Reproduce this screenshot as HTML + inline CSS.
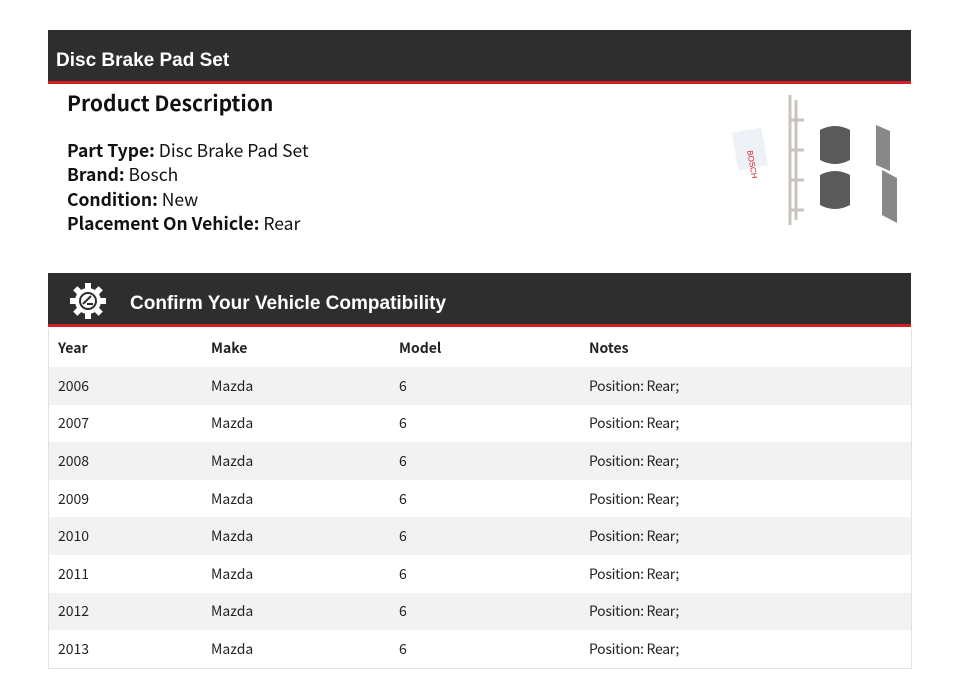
<!DOCTYPE html>
<html><head><meta charset="utf-8"><style>
body{margin:0;background:#fff;width:960px;height:697px;position:relative;overflow:hidden;font-family:"Noto Sans CJK JP","DejaVu Sans",sans-serif;color:#111}
.bar{position:absolute;left:48px;width:863px;background:#2f2e2e;border-bottom:3px solid #d32027;color:#fff;font-family:"Liberation Sans",Arial,sans-serif;font-weight:bold}
.t{position:absolute;white-space:nowrap}
table{position:absolute;left:48px;top:329px;width:864px;border-collapse:collapse;border:1px solid #e2e2e2;border-top:none;font-size:14px;color:#222}
td,th{height:37.6px;padding:0 0 0 9px;text-align:left;line-height:1}
td:last-child{letter-spacing:-0.3px}
th{font-weight:bold;height:38px}
tr:nth-child(even){background:#f2f2f2}
</style></head><body>
<div class="bar" style="top:30px;height:51px"><div class="t" style="left:8px;top:20px;font-size:19px">Disc Brake Pad Set</div></div>
<div class="t" style="left:67px;top:88px;font-size:21px;font-weight:bold">Product Description</div>
<div class="t" style="left:67px;top:139px;font-size:17.5px;line-height:24.3px"><b>Part Type:</b> Disc Brake Pad Set<br><b>Brand:</b> Bosch<br><b>Condition:</b> New<br><b>Placement On Vehicle:</b> Rear</div>
<svg style="position:absolute;left:730px;top:90px" width="180" height="140">
<rect x="5" y="40" width="30" height="38" fill="#eef2f6" transform="rotate(-10 20 60)"/>
<text x="22" y="65" font-size="8" fill="#d32027" font-family="Liberation Sans" transform="rotate(80 22 60)">BOSCH</text>
<g fill="none" stroke="#c9c4bd" stroke-width="3"><path d="M60 5v130M60 30h14M60 60h14M60 90h14M60 120h14M66 10v120"/></g>
<path d="M90 40q15-8 30 0v30q-15 8-30 0z" fill="#5a5a5a"/>
<path d="M90 85q15-8 30 0v30q-15 8-30 0z" fill="#5a5a5a"/>
<path d="M146 35l14 6v40l-14-6z" fill="#888"/>
<path d="M152 80l15 8v45l-15-8z" fill="#888"/>
</svg>
<div class="bar" style="top:273px;height:51px">
<svg style="position:absolute;left:21px;top:9px" width="38" height="38" viewBox="0 0 38 38"><g fill="#fff"><circle cx="19" cy="19" r="13"/><g id="k"><rect x="16" y="1" width="6" height="8"/><rect x="16" y="29" width="6" height="8"/><rect x="1" y="16" width="8" height="6"/><rect x="29" y="16" width="8" height="6"/></g><use href="#k" transform="rotate(45 19 19)"/></g><circle cx="19" cy="19" r="8" fill="none" stroke="#2f2e2e" stroke-width="2"/><path d="M14 22l8-8M18 22h6" stroke="#2f2e2e" stroke-width="2"/></svg>
<div class="t" style="left:82px;top:20px;font-size:19px">Confirm Your Vehicle Compatibility</div></div>
<table>
<tr><th style="width:144px">Year</th><th style="width:179px">Make</th><th style="width:181px">Model</th><th>Notes</th></tr>
<tr><td>2006</td><td>Mazda</td><td>6</td><td>Position: Rear;</td></tr>
<tr><td>2007</td><td>Mazda</td><td>6</td><td>Position: Rear;</td></tr>
<tr><td>2008</td><td>Mazda</td><td>6</td><td>Position: Rear;</td></tr>
<tr><td>2009</td><td>Mazda</td><td>6</td><td>Position: Rear;</td></tr>
<tr><td>2010</td><td>Mazda</td><td>6</td><td>Position: Rear;</td></tr>
<tr><td>2011</td><td>Mazda</td><td>6</td><td>Position: Rear;</td></tr>
<tr><td>2012</td><td>Mazda</td><td>6</td><td>Position: Rear;</td></tr>
<tr><td>2013</td><td>Mazda</td><td>6</td><td>Position: Rear;</td></tr>
</table>
</body></html>
